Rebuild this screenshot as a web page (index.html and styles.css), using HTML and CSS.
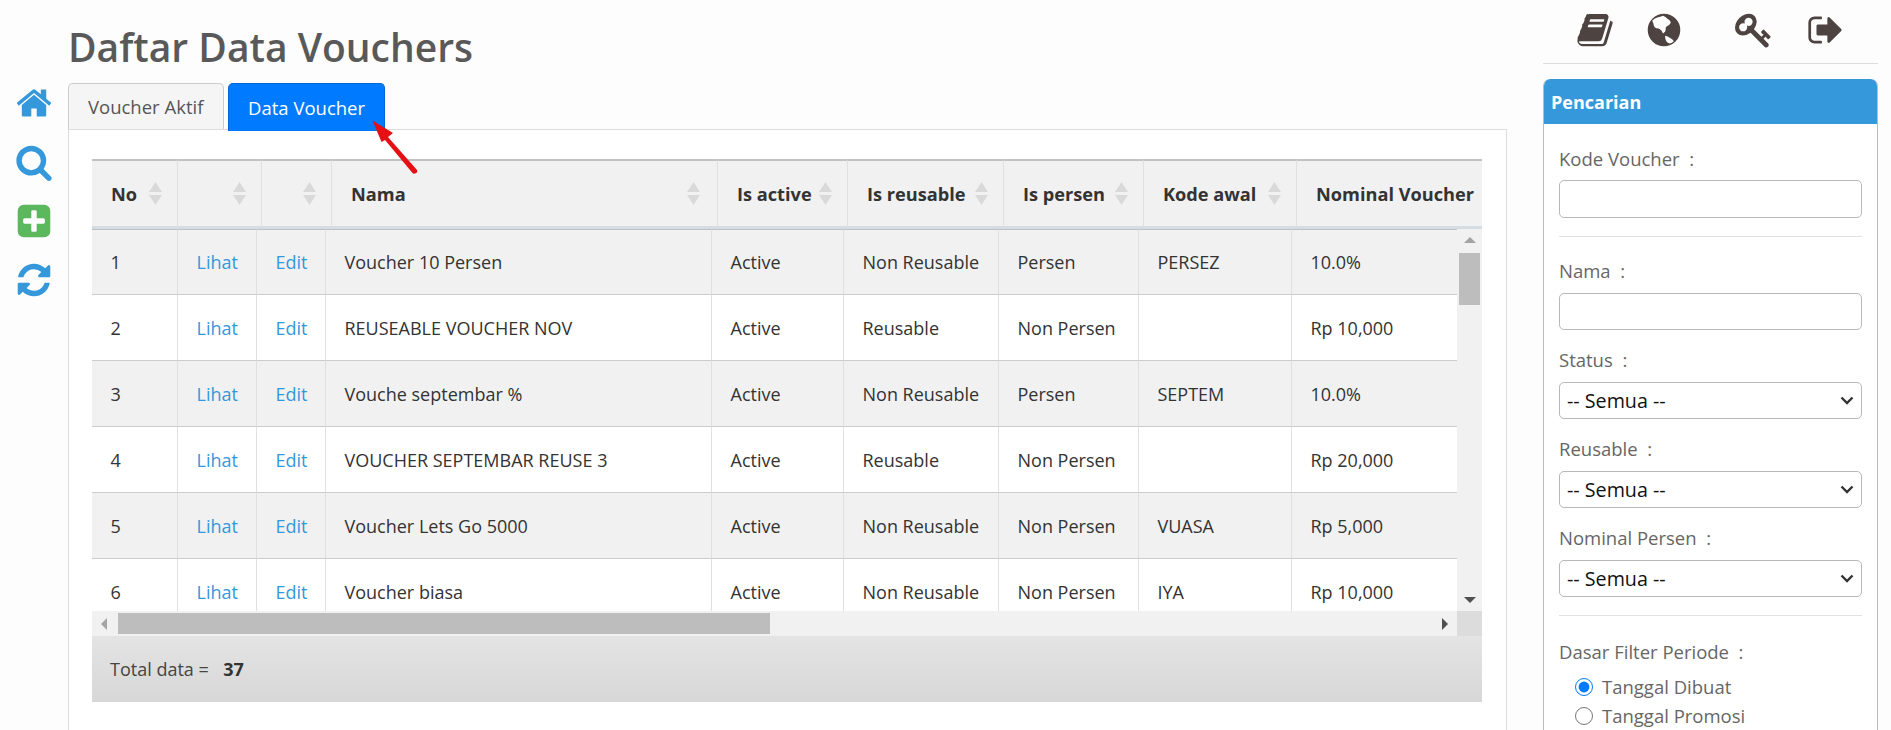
FILE: index.html
```html
<!DOCTYPE html>
<html lang="id">
<head>
<meta charset="utf-8">
<title>Daftar Data Vouchers</title>
<link rel="stylesheet" href="styles.css">
</head>
<body>
<svg width="0" height="0" class="defs">
  <defs>
    <symbol id="sort" viewBox="0 0 13 23"><path d="M6.500 0L13 10H0zM6.500 23L0 13h13z"/></symbol>
  </defs>
</svg>
<nav class="side">
  <svg class="ic blue" viewBox="0 0 1792 1792"><path d="M1472 992v480q0 26-19 45t-45 19h-384v-384h-256v384h-384q-26 0-45-19t-19-45v-480q0-1 .5-3t.5-3l575-474 575 474q1 2 1 6zm223-69l-62 74q-8 9-21 11h-3q-13 0-21-7l-692-577-692 577q-12 8-24 7-13-2-21-11l-62-74q-8-10-7-23.5t11-21.5l719-599q32-26 76-26t76 26l244 204v-195q0-14 9-23t23-9h192q14 0 23 9t9 23v408l219 182q10 8 11 21.5t-7 23.5z"/></svg>
  <svg class="ic blue" viewBox="0 0 1792 1792"><path d="M1216 832q0-185-131.5-316.5t-316.5-131.5-316.5 131.5-131.5 316.5 131.5 316.5 316.5 131.5 316.5-131.5 131.5-316.5zm512 832q0 52-38 90t-90 38q-54 0-90-38l-343-342q-179 124-399 124-143 0-273.5-55.5t-225-150-150-225-55.5-273.5 55.5-273.5 150-225 225-150 273.5-55.5 273.5 55.5 225 150 150 225 55.5 273.5q0 220-124 399l343 343q37 37 37 90z"/></svg>
  <svg class="ic green" viewBox="0 0 1792 1792"><path d="M1408 960v-128q0-26-19-45t-45-19h-320v-320q0-26-19-45t-45-19h-128q-26 0-45 19t-19 45v320h-320q-26 0-45 19t-19 45v128q0 26 19 45t45 19h320v320q0 26 19 45t45 19h128q26 0 45-19t19-45v-320h320q26 0 45-19t19-45zm256-544v960q0 119-84.5 203.5t-203.5 84.5h-960q-119 0-203.5-84.5t-84.5-203.5v-960q0-119 84.5-203.5t203.5-84.5h960q119 0 203.5 84.5t84.5 203.5z"/></svg>
  <svg class="ic blue" viewBox="0 0 1792 1792"><path d="M1639 1056q0 5-1 7-64 268-268 434.5t-478 166.5q-146 0-282.5-55t-243.5-157l-129 129q-19 19-45 19t-45-19-19-45v-448q0-26 19-45t45-19h448q26 0 45 19t19 45-19 45l-137 137q71 66 161 102t187 36q134 0 250-65t186-179q11-17 53-117 8-23 30-23h192q13 0 22.5 9.5t9.5 22.5zm25-800v448q0 26-19 45t-45 19h-448q-26 0-45-19t-19-45 19-45l138-138q-148-137-349-137-134 0-250 65t-186 179q-11 17-53 117-8 23-30 23h-199q-13 0-22.5-9.5t-9.5-22.5v-7q65-268 270-434.5t480-166.5q146 0 284 55.5t245 156.5l130-129q19-19 45-19t45 19 19 45z"/></svg>
</nav>
<main class="main">
  <h1 class="title">Daftar Data Vouchers</h1>
  <div class="tabs">
    <a class="tab">Voucher Aktif</a>
    <a class="tab active">Data Voucher</a>
  </div>
  <section class="pane">
    <div class="grid">
      <div class="head">
        <table class="thead">
          <colgroup><col class="h1"><col class="h2"><col class="h3"><col class="h4"><col class="h5"><col class="h6"><col class="h7"><col class="h8"><col class="h9"></colgroup>
          <tr>
            <th><span class="thc">No<svg class="sort"><use href="#sort"/></svg></span></th>
            <th><span class="thc"><svg class="sort"><use href="#sort"/></svg></span></th>
            <th><span class="thc"><svg class="sort"><use href="#sort"/></svg></span></th>
            <th><span class="thc nm">Nama<svg class="sort"><use href="#sort"/></svg></span></th>
            <th><span class="thc">Is active<svg class="sort"><use href="#sort"/></svg></span></th>
            <th><span class="thc">Is reusable<svg class="sort"><use href="#sort"/></svg></span></th>
            <th><span class="thc">Is persen<svg class="sort"><use href="#sort"/></svg></span></th>
            <th><span class="thc">Kode awal<svg class="sort"><use href="#sort"/></svg></span></th>
            <th><span class="thc">Nominal Voucher</span></th>
          </tr>
        </table>
      </div>
      <div class="scroll">
        <div class="bodywrap">
          <table class="tbody">
            <colgroup><col class="b1"><col class="b2"><col class="b3"><col class="b4"><col class="b5"><col class="b6"><col class="b7"><col class="b8"><col class="b9"></colgroup>
            <tr><td>1</td><td><a>Lihat</a></td><td><a>Edit</a></td><td>Voucher 10 Persen</td><td>Active</td><td>Non Reusable</td><td>Persen</td><td>PERSEZ</td><td>10.0%</td></tr>
            <tr><td>2</td><td><a>Lihat</a></td><td><a>Edit</a></td><td>REUSEABLE VOUCHER NOV</td><td>Active</td><td>Reusable</td><td>Non Persen</td><td></td><td>Rp 10,000</td></tr>
            <tr><td>3</td><td><a>Lihat</a></td><td><a>Edit</a></td><td>Vouche septembar %</td><td>Active</td><td>Non Reusable</td><td>Persen</td><td>SEPTEM</td><td>10.0%</td></tr>
            <tr><td>4</td><td><a>Lihat</a></td><td><a>Edit</a></td><td>VOUCHER SEPTEMBAR REUSE 3</td><td>Active</td><td>Reusable</td><td>Non Persen</td><td></td><td>Rp 20,000</td></tr>
            <tr><td>5</td><td><a>Lihat</a></td><td><a>Edit</a></td><td>Voucher Lets Go 5000</td><td>Active</td><td>Non Reusable</td><td>Non Persen</td><td>VUASA</td><td>Rp 5,000</td></tr>
            <tr><td>6</td><td><a>Lihat</a></td><td><a>Edit</a></td><td>Voucher biasa</td><td>Active</td><td>Non Reusable</td><td>Non Persen</td><td>IYA</td><td>Rp 10,000</td></tr>
          </table>
        </div>
        <div class="vbar">
          <span class="arr up"></span>
          <span class="vthumb"></span>
          <span class="arr down"></span>
        </div>
      </div>
      <div class="hrow">
        <div class="hbar">
          <span class="arr left"></span>
          <span class="hthumb"></span>
          <span class="arr rightw"></span>
        </div>
        <div class="corner"></div>
      </div>
      <div class="total">Total data =&nbsp; <b>37</b></div>
    </div>
  </section>
</main>
<aside class="right">
  <div class="top">
    <svg class="ic dark i1" viewBox="0 0 1792 1792"><path d="M1703 478q40 57 18 129l-275 906q-19 64-76.5 107.5t-122.5 43.5h-923q-77 0-148.5-53.5t-99.5-131.5q-24-67-2-127 0-4 3-27t4-37q1-8-3-21.5t-3-19.5q2-11 8-21t16.5-23.5 16.5-23.5q23-38 45-91.5t30-91.5q3-10 .5-30t-.5-28q3-11 17-28t17-23q21-36 42-92t25-90q1-9-2.5-32t.5-28q4-13 22-30.5t22-22.5q19-26 42.5-84.5t27.5-96.5q1-8-3-25.5t-2-26.5q2-8 9-18t18-23 17-21q8-12 16.5-35.5t15-42 14.5-36.5 23-27.5 31-8.5 41 7.5l-1 3q38-11 51-11h761q74 0 114 56t18 130l-274 906q-36 119-71.5 153.5t-128.5 34.5h-869q-27 0-38 15-11 16-1 43 24 70 144 70h923q29 0 56-15.5t35-41.5l300-987q7-22 5-57 38 15 59 43zm-1064 2q-4 13 2 22.5t20 9.5h608q13 0 25.5-9.5t16.5-22.5l21-64q4-13-2-22.5t-20-9.5h-608q-13 0-25.5 9.5t-16.5 22.5zm-83 256q-4 13 2 22.5t20 9.5h608q13 0 25.5-9.5t16.5-22.5l21-64q4-13-2-22.5t-20-9.5h-608q-13 0-25.5 9.5t-16.5 22.5z"/></svg>
    <svg class="ic dark i2" viewBox="0 0 1792 1792"><path fill-rule="evenodd" d="M896 128a768 768 0 1 0 0 1536a768 768 0 1 0 0-1536zM336 464Q440 340 576 304Q720 280 848 224Q980 280 1056 368Q1180 420 1216 528Q1190 640 1104 688Q1020 720 976 784Q990 900 944 976L848 1056Q800 920 688 848Q600 800 528 816Q440 780 416 688Q400 560 336 464zM944 1168Q1080 1180 1168 1264Q1300 1320 1360 1424Q1270 1510 1168 1536Q1060 1500 1008 1424Q940 1300 944 1168z"/></svg>
    <svg class="ic dark i3" viewBox="0 0 1792 1792"><path d="M832 512q0-80-56-136t-136-56-136 56-56 136q0 42 19 83-41-19-83-19-80 0-136 56t-56 136 56 136 136 56 136-56 56-136q0-42-19-83 41 19 83 19 80 0 136-56t56-136zm851 704q0 17-49 66t-66 49q-9 0-28.5-16t-36.5-33-38.5-40-24.5-26l-96 96 220 220q28 28 28 68 0 42-39 81t-81 39q-40 0-68-28l-671-671q-176 131-365 131-163 0-265.5-102.5t-102.5-265.5q0-160 95-313t248-248 313-95q163 0 265.5 102.5t102.5 265.5q0 189-131 365l355 355 96-96q-3-3-26-24.5t-40-38.5-33-36.5-16-28.5q0-17 49-66t66-49q13 0 23 10 6 6 46 44.5t82 79.5 86.5 86 73 78 28.5 41z"/></svg>
    <svg class="ic dark i4" viewBox="0 0 1792 1792"><path d="M704 1440q0 4 1 20t.5 26.5-3 23.5-10 19.5-20.5 6.5h-320q-119 0-203.5-84.5t-84.5-203.5v-704q0-119 84.5-203.5t203.5-84.5h320q13 0 22.5 9.5t9.5 22.5q0 4 1 20t.5 26.5-3 23.5-10 19.5-20.5 6.5h-320q-66 0-113 47t-47 113v704q0 66 47 113t113 47h312l11.5 1 11.5 3 8 5.5 7 9 2 13.5zm928-544q0 26-19 45l-544 544q-19 19-45 19t-45-19-19-45v-288h-448q-26 0-45-19t-19-45v-384q0-26 19-45t45-19h448v-288q0-26 19-45t45-19 45 19l544 544q19 19 19 45z"/></svg>
  </div>
  <section class="panel">
    <h2 class="panel-h">Pencarian</h2>
    <form class="panel-b">
      <label class="lbl first">Kode Voucher&nbsp; :</label>
      <input class="ctl" type="text">
      <hr class="sep">
      <label class="lbl aftersep">Nama&nbsp; :</label>
      <input class="ctl inp2" type="text">
      <label class="lbl">Status&nbsp; :</label>
      <select class="ctl sel"><option>-- Semua --</option></select>
      <label class="lbl">Reusable&nbsp; :</label>
      <select class="ctl sel"><option>-- Semua --</option></select>
      <label class="lbl">Nominal Persen&nbsp; :</label>
      <select class="ctl sel"><option>-- Semua --</option></select>
      <hr class="sep">
      <label class="lbl dasar">Dasar Filter Periode&nbsp; :</label>
      <label class="radio"><input type="radio" name="d" checked>Tanggal Dibuat</label>
      <label class="radio"><input type="radio" name="d">Tanggal Promosi</label>
    </form>
  </section>
</aside>
<svg class="pointer" viewBox="0 0 47 55"><path d="M0.500 0.500L21 13L16 17L45 50Q46 53 43 53.500Q41.500 54 40.500 53L13 20L9.500 22Z"/></svg>
</body>
</html>
```
FILE: styles.css
```css
* { box-sizing: border-box; }
html, body { margin: 0; height: 730px; overflow: hidden; }
body {
  display: flex;
  align-items: flex-start;
  background: #fdfdfd;
  font-family: "Open Sans", "Noto Sans", sans-serif;
  font-size: 18px;
  color: #333;
  width: 1891px;
  position: relative;
}
.defs { position: absolute; }
.ic { width: 38px; height: 38px; flex: none; display: block; }
.blue { fill: #3498db; }
.green { fill: #5cb85c; }
.dark { fill: #4d4442; }
.side {
  width: 68px;
  flex: none;
  display: flex;
  flex-direction: column;
  align-items: center;
  gap: 21px;
  padding-top: 84px;
}
.main { width: 1439px; flex: none; }
.title {
  margin: 0;
  height: 83px;
  padding-top: 20px;
  font-size: 39px;
  line-height: 54px;
  font-weight: 600;
  color: #595959;
}
.tabs { display: flex; gap: 4px; height: 46px; position: relative; z-index: 1; }
.tab {
  height: 46px;
  padding: 0 19px;
  display: flex;
  align-items: center;
  border: 1px solid #ccc;
  border-bottom: 0;
  border-radius: 5px 5px 0 0;
  background: #f5f5f5;
  color: #555;
  font-size: 18.500px;
  white-space: nowrap;
}
.tab:first-child { width: 156px; }
.tab.active { width: 157px; height: 48px; background: #007bff; border-color: #0069d9; color: #fff; }
.pane {
  height: 601px;
  background: #fff;
  border: 1px solid #dcdcdc;
  border-bottom: 0;
  padding: 29px 23px 0;
}
.grid { width: 1390px; }
.head { overflow: hidden; height: 70px; }
table { border-collapse: separate; border-spacing: 0; table-layout: fixed; }
.thead { width: 1405px; }
.h1 { width: 86px; } .h2 { width: 84px; } .h3 { width: 70px; } .h4 { width: 386px; }
.h5 { width: 130px; } .h6 { width: 156px; } .h7 { width: 140px; } .h8 { width: 153px; } .h9 { width: 200px; }
.tbody { width: 1400px; }
.b1 { width: 86px; } .b2 { width: 79px; } .b3 { width: 69px; } .b4 { width: 386px; }
.b5 { width: 132px; } .b6 { width: 155px; } .b7 { width: 140px; } .b8 { width: 153px; } .b9 { width: 200px; }
th {
  height: 70px;
  padding: 0 0 0 19px;
  background: #f1f1f1;
  border-top: 2px solid #bfc1c3;
  border-bottom: 3px solid #d5dde3;
  border-right: 1px solid #e0e0e0;
  text-align: left;
  font-size: 18.200px;
  font-weight: 700;
  white-space: nowrap;
  color: #333;
}
.thc { display: flex; align-items: center; justify-content: space-between; padding-right: 15px; }
.thc.nm { padding-right: 17px; }
.sort { width: 13px; height: 23px; fill: #d9d9d9; flex: none; margin-left: auto; }
.scroll { display: flex; height: 382px; background: #fff; }
.bodywrap { width: 1365px; overflow: hidden; flex: none; }
td {
  height: 66px;
  padding: 0 0 0 18.500px;
  border-right: 1px solid #e0e0e0;
  border-bottom: 1px solid #ccc;
  white-space: nowrap;
  color: #333;
}
tr:nth-child(odd) td { background: #f1f1f1; }
tr:first-child td { border-top: 1px solid #bbc1c6; }
td a { color: #3498db; }
.vbar {
  width: 25px;
  flex: none;
  background: #f1f1f1;
  display: flex;
  flex-direction: column;
  align-items: center;
  padding: 8px 0;
  position: relative;
}
.vthumb { position: absolute; top: 24px; left: 2px; width: 21px; height: 52px; background: #bdbdbd; }
.vbar .down { margin-top: auto; }
.hrow { display: flex; height: 25px; }
.hbar {
  width: 1365px;
  background: #f1f1f1;
  display: flex;
  align-items: center;
  justify-content: space-between;
  padding: 0 9px;
  position: relative;
}
.hthumb { position: absolute; left: 26px; top: 2px; width: 652px; height: 21px; background: #bdbdbd; }
.corner { width: 25px; background: #dcdcdc; }
.arr { width: 0; height: 0; border-style: solid; border-color: transparent; display: block; }
.up { border-width: 0 6px 6px; border-bottom-color: #a3a3a3; }
.down { border-width: 6px 6px 0; border-top-color: #505050; }
.left { border-width: 6px 6px 6px 0; border-right-color: #a3a3a3; }
.rightw { border-width: 6px 0 6px 6px; border-left-color: #505050; }
.total {
  height: 66px;
  padding-left: 18px;
  display: flex;
  align-items: center;
  background: linear-gradient(#e4e4e4, #d7d7d7);
  color: #444;
  white-space: pre;
}
.total b { color: #333; margin-left: 5px; }
aside.right { width: 335px; margin-left: 36px; flex: none; }
.top {
  height: 64px;
  border-bottom: 1px solid #ddd;
  display: flex;
  padding-top: 11px;
}
.i1 { margin-left: 33px; }
.i2 { margin-left: 31px; }
.i3 { margin-left: 52px; }
.i4 { margin-left: 34px; }
.panel {
  margin-top: 15px;
  height: 651px;
  overflow: hidden;
  border: 1px solid #bbb;
  border-top: 0;
  border-bottom: 0;
  border-radius: 7px 7px 0 0;
  background: #fff;
}
.panel-h {
  margin: 0 -1px;
  height: 45px;
  padding: 0 8px;
  display: flex;
  align-items: center;
  background: #3498db;
  border-radius: 7px 7px 0 0;
  color: #fff;
  font-size: 18px;
  font-weight: 700;
}
.panel-b { padding: 0 15px; display: flex; flex-direction: column; }
.lbl { color: #666; font-size: 18.500px; line-height: 24px; margin: 18px 0 10px; white-space: nowrap; }
.lbl.first { margin-top: 23px; margin-bottom: 9px; }
.lbl.aftersep { margin-top: 22px; }
.ctl {
  width: 100%;
  height: 38px;
  border: 1px solid #b8b8b8;
  border-radius: 5px;
  background: #fff;
  font: inherit;
  color: #111;
  flex: none;
}
.inp2 { height: 37px; }
.sel {
  height: 37px;
  padding-left: 7px;
  font-size: 19.700px;
  appearance: none;
  background: #fff url("data:image/svg+xml,%3Csvg xmlns='http://www.w3.org/2000/svg' viewBox='0 0 14 9'%3E%3Cpath d='M1.500 1.500L7 7l5.500-5.500' fill='none' stroke='%23333' stroke-width='2.400'/%3E%3C/svg%3E") no-repeat right 7px center / 14px 9px;
}
.sep { width: 100%; margin: 18px 0 0; border: 0; border-top: 1px solid #e2e2e2; }
.dasar { margin-top: 24px; margin-bottom: 8px; }
.radio { display: flex; align-items: center; gap: 9px; height: 29px; padding-left: 16px; color: #666; font-size: 18.500px; white-space: nowrap; flex: none; }
.radio input { margin: 0; width: 18px; height: 18px; accent-color: #007bff; }
.pointer { position: absolute; left: 372px; top: 120px; width: 47px; height: 55px; fill: #e60f14; z-index: 5; }
```
